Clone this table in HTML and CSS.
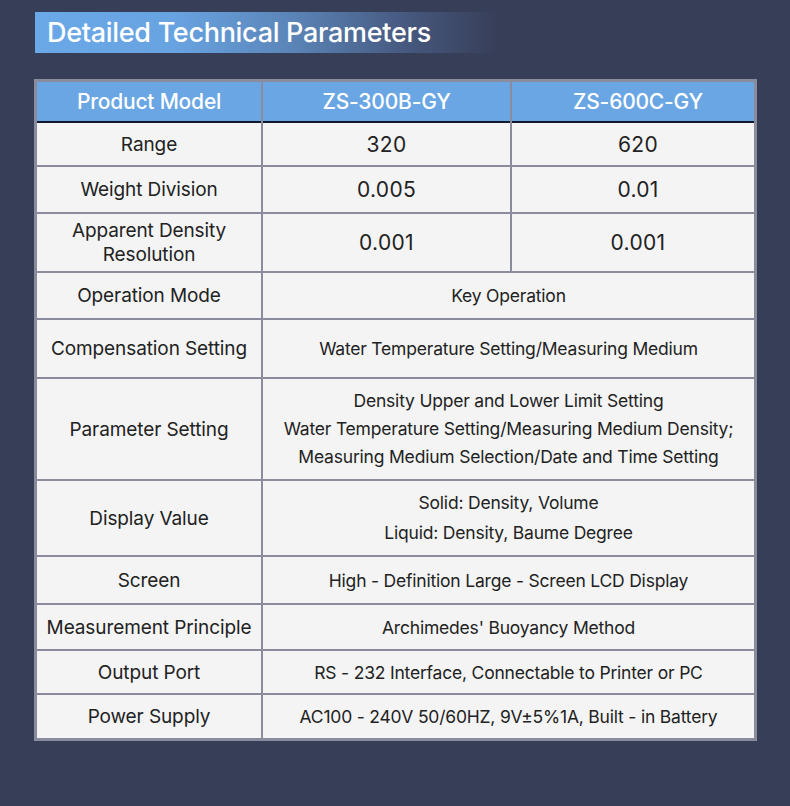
FILE: index.html
```html
<!DOCTYPE html>
<html>
<head>
<meta charset="utf-8">
<link rel="stylesheet" href="styles.css">
</head>
<body>
<div class="page">
  <div class="title"><span>Detailed Technical Parameters</span></div>
  <div class="spec">
    <div class="cell head">Product Model</div>
    <div class="cell head">ZS-300B-GY</div>
    <div class="cell head c3">ZS-600C-GY</div>

    <div class="cell lab">Range</div>
    <div class="cell num">320</div>
    <div class="cell num c3">620</div>

    <div class="cell lab">Weight Division</div>
    <div class="cell num">0.005</div>
    <div class="cell num c3">0.01</div>

    <div class="cell lab tight">Apparent Density<br>Resolution</div>
    <div class="cell num">0.001</div>
    <div class="cell num c3">0.001</div>

    <div class="cell lab">Operation Mode</div>
    <div class="cell val span">Key Operation</div>

    <div class="cell lab">Compensation Setting</div>
    <div class="cell val span">Water Temperature Setting/Measuring Medium</div>

    <div class="cell lab">Parameter Setting</div>
    <div class="cell val span lines28">Density Upper and Lower Limit Setting<br>Water Temperature Setting/Measuring Medium Density;<br>Measuring Medium Selection/Date and Time Setting</div>

    <div class="cell lab">Display Value</div>
    <div class="cell val span lines30">Solid: Density, Volume<br>Liquid: Density, Baume Degree</div>

    <div class="cell lab">Screen</div>
    <div class="cell val span">High - Definition Large - Screen LCD Display</div>

    <div class="cell lab">Measurement Principle</div>
    <div class="cell val span">Archimedes' Buoyancy Method</div>

    <div class="cell lab">Output Port</div>
    <div class="cell val span">RS - 232 Interface, Connectable to Printer or PC</div>

    <div class="cell lab">Power Supply</div>
    <div class="cell val span">AC100 - 240V 50/60HZ, 9V±5%1A, Built - in Battery</div>
  </div>
</div>
</body>
</html>
```
FILE: styles.css
```css
html, body {
  margin: 0;
  padding: 0;
  background: #373e57;
}
.page {
  width: 790px;
  height: 806px;
  padding: 12px 0 0 34px;
  box-sizing: border-box;
  font-family: "Inter", "Noto Sans", sans-serif;
}
.title {
  margin-left: 1px;
  width: 465px;
  height: 41px;
  background: linear-gradient(90deg, #6aa8e7 0%, #68a3e1 30%, #5b85b8 55%, #46587e 80%, #373e57 100%);
  display: flex;
  align-items: center;
  padding-left: 12px;
  box-sizing: border-box;
}
.title span {
  color: #ffffff;
  font-size: 27px;
  font-weight: 500;
  letter-spacing: -0.3px;
}
.spec {
  margin-top: 26px;
  width: 723px;
  box-sizing: border-box;
  display: grid;
  grid-template-columns: 224px 247px 242px;
  grid-template-rows: 39px 42px 45px 57px 45px 57px 100px 74px 46px 44px 42px 43px;
  gap: 2px;
  background: #8a8c9d;
  border: 3px solid #8a8c9d;
}
.cell {
  background: #f4f4f5;
  color: #222;
  display: flex;
  align-items: center;
  justify-content: center;
  text-align: center;
  font-size: 17px;
  letter-spacing: -0.2px;
}
.c3 {
  padding-left: 10px;
}
.head {
  background: #6aa6e4;
  color: #ffffff;
  font-size: 21px;
  font-weight: 500;
  border-bottom: 2px solid #12172a;
  margin-bottom: -2px;
}
.lab {
  font-size: 19px;
  letter-spacing: -0.1px;
}
.num {
  font-size: 21px;
  letter-spacing: 0.3px;
}
.val {
  font-size: 17.5px;
}
.span {
  grid-column: 2 / span 2;
}
.tight {
  line-height: 24px;
}
.lines28 {
  line-height: 28px;
}
.lines30 {
  line-height: 30px;
}
```
